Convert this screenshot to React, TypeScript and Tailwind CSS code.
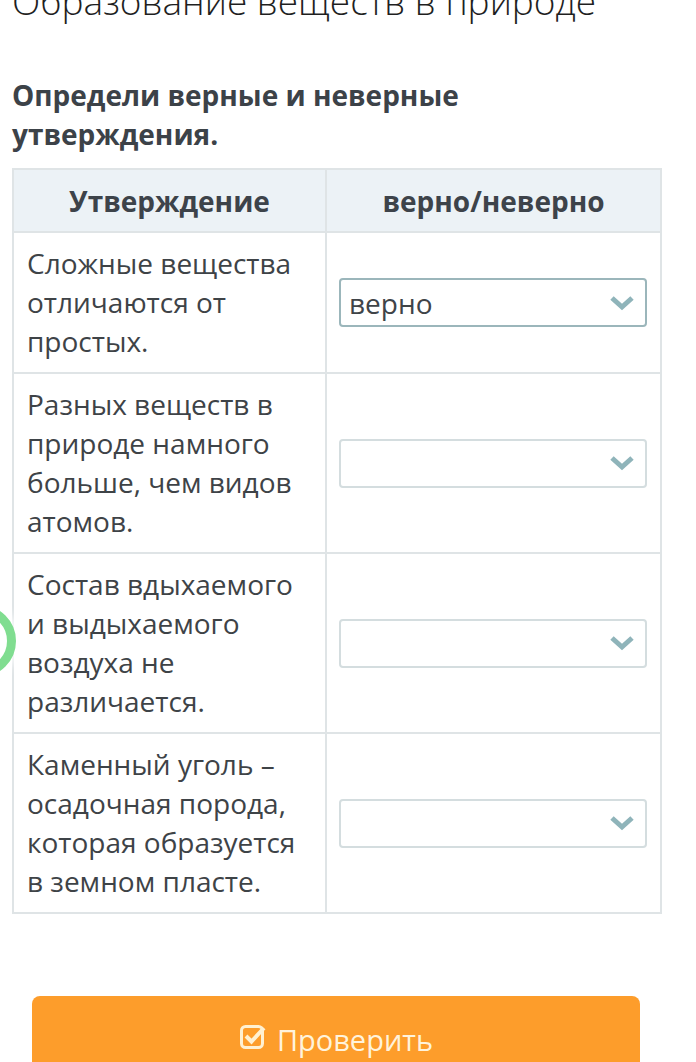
import React from "react";

type Row = { text: string; value: string; active?: boolean };

const rows: Row[] = [
  { text: "Сложные вещества отличаются от простых.", value: "верно", active: true },
  { text: "Разных веществ в природе намного больше, чем видов атомов.", value: "" },
  { text: "Состав вдыхаемого и выдыхаемого воздуха не различается.", value: "" },
  { text: "Каменный уголь – осадочная порода, которая образуется в земном пласте.", value: "" },
];

function Chevron() {
  return (
    <svg width="26" height="16" viewBox="0 0 26 16" className="flex-shrink-0">
      <path d="M3 3 L13 12 L23 3" fill="none" stroke="#8fb4ba" strokeWidth="5" strokeLinejoin="miter" />
    </svg>
  );
}

function CheckSquare() {
  return (
    <svg width="28" height="28" viewBox="0 0 28 28" className="flex-shrink-0">
      <rect x="2.5" y="4.5" width="21" height="21" rx="4" fill="none" stroke="#fff1d2" strokeWidth="3" />
      <path d="M7 14 L12.5 19.5 L25 6" fill="none" stroke="#fff1d2" strokeWidth="4" />
    </svg>
  );
}

function Select({ value, active }: { value: string; active?: boolean }) {
  return (
    <div
      className={`flex items-center justify-between h-[49px] rounded-[4px] bg-white pl-[8px] pr-[10px] border-2 ${
        active ? "border-[#9bb6bb]" : "border-[#d4dddf]"
      }`}
    >
      <span className="text-[28px] leading-none text-[#3f4448]">{value}</span>
      <Chevron />
    </div>
  );
}

export default function App() {
  return (
    <div
      className="relative min-h-[1062px] w-[696px] overflow-hidden bg-white"
      style={{ fontFamily: '"Open Sans", "Liberation Sans", sans-serif' }}
    >
      {/* floating green button, mostly off-screen */}
      <div className="absolute left-[-56px] top-[605px] h-[72px] w-[72px] rounded-full border-[9px] border-[#80dd90] bg-white shadow-[0_0_8px_4px_rgba(255,255,255,0.9)]" />

      <div className="px-[12px] pr-[36px]">
        <h1 className="mt-[-21px] text-[37px] font-light leading-[44px] text-[#1f1f1f] whitespace-nowrap">
          Образование веществ в природе
        </h1>

        <h2 className="mt-[53px] text-[28px] font-bold leading-[39px] text-[#3c4248]">
          Определи верные и неверные утверждения.
        </h2>

        <table className="mt-[14px] w-[648px] border-collapse border-2 border-[#dfe4e6] table-fixed">
          <colgroup>
            <col className="w-[313px]" />
            <col className="w-[335px]" />
          </colgroup>
          <thead>
            <tr className="h-[63px] bg-[#ecf2f6]">
              <th className="border-2 border-[#dfe4e6] text-[28px] font-bold text-[#3d434a]">Утверждение</th>
              <th className="border-2 border-[#dfe4e6] text-[28px] font-bold text-[#3d434a]">верно/неверно</th>
            </tr>
          </thead>
          <tbody>
            {rows.map((r, i) => (
              <tr key={i}>
                <td className="border-2 border-[#dfe4e6] px-[13px] py-[11px] align-top text-[28px] leading-[39px] text-[#3e4347]">
                  {r.text}
                </td>
                <td className="border-2 border-[#dfe4e6] pl-[12px] pr-[13px] align-middle">
                  <Select value={r.value} active={r.active} />
                </td>
              </tr>
            ))}
          </tbody>
        </table>
      </div>

      <div className="mt-[82px] px-[32px] pr-[56px]">
        <button className="flex h-[90px] w-[608px] items-start justify-center gap-[10px] rounded-[8px] bg-[#fd9d2b] pt-[26px] text-[29px] leading-[36px] text-[#fff3dc]">
          <CheckSquare />
          Проверить
        </button>
      </div>
    </div>
  );
}
